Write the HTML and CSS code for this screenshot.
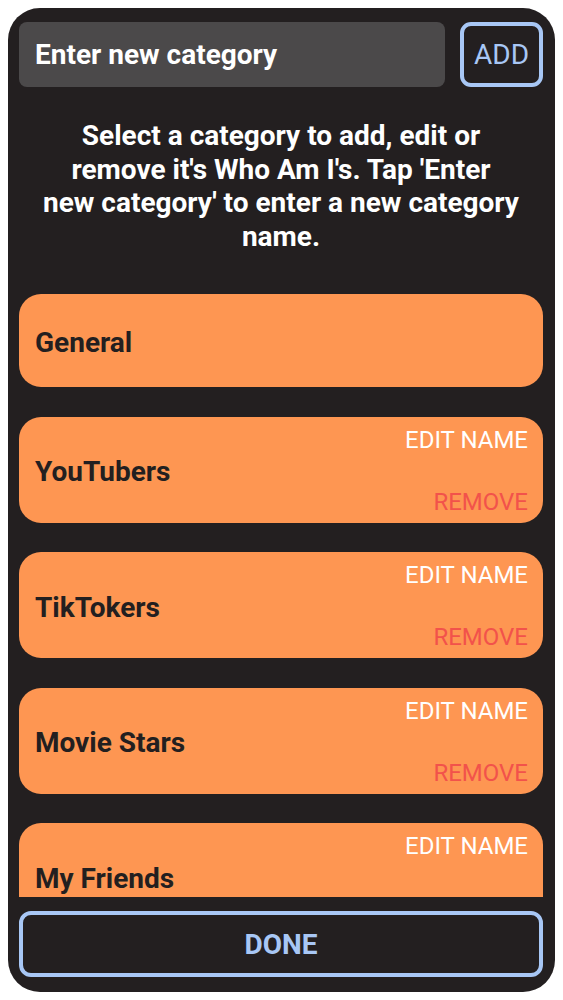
FILE: index.html
```html
<!DOCTYPE html>
<html>
<head>
  <title>Categories</title>
  <link rel="stylesheet" href="styles.css">
</head>
<body>
  <div class="panel">
    <div class="new-category">
      <input class="category-input" type="text" placeholder="Enter new category">
      <button class="add-button">ADD</button>
    </div>
    <p class="hint">Select a category to add, edit or remove it's Who Am I's. Tap 'Enter new&nbsp;category' to enter a new category name.</p>
    <div class="category-list">
      <div class="category fixed">
        <span class="category-name">General</span>
      </div>
      <div class="category">
        <span class="category-name">YouTubers</span>
        <div class="category-actions">
          <button class="edit">EDIT NAME</button>
          <button class="remove">REMOVE</button>
        </div>
      </div>
      <div class="category">
        <span class="category-name">TikTokers</span>
        <div class="category-actions">
          <button class="edit">EDIT NAME</button>
          <button class="remove">REMOVE</button>
        </div>
      </div>
      <div class="category">
        <span class="category-name">Movie Stars</span>
        <div class="category-actions">
          <button class="edit">EDIT NAME</button>
          <button class="remove">REMOVE</button>
        </div>
      </div>
      <div class="category">
        <span class="category-name">My Friends</span>
        <div class="category-actions">
          <button class="edit">EDIT NAME</button>
          <button class="remove">REMOVE</button>
        </div>
      </div>
    </div>
    <button class="done-button">DONE</button>
  </div>
</body>
</html>
```

FILE: styles.css
```css
body {
  margin: 0;
  background-color: #fff;
  font-family: Roboto, "Liberation Sans", sans-serif;
}
.panel {
  margin: 8px;
  height: 984px;
  box-sizing: border-box;
  padding: 14px 12px 15px 11px;
  background-color: #231f20;
  border-radius: 32px;
  display: flex;
  flex-direction: column;
}
.new-category {
  display: flex;
  gap: 15px;
  height: 65px;
}
.category-input {
  flex: 1;
  min-width: 0;
  border: none;
  border-radius: 8px;
  background-color: #4b494a;
  padding: 0 16px;
  font-family: inherit;
  font-size: 28px;
  font-weight: bold;
  color: #fff;
  outline: none;
}
.category-input::placeholder {
  color: #fff;
  opacity: 1;
}
.add-button {
  width: 83px;
  box-sizing: border-box;
  border: 4px solid #a8c7f5;
  border-radius: 11px;
  background-color: transparent;
  color: #a8c7f5;
  font-family: inherit;
  font-size: 28px;
  padding: 0;
}
.hint {
  margin: 32px 16px 41px;
  text-align: center;
  color: #fff;
  font-size: 28px;
  font-weight: bold;
  line-height: 33.5px;
}
.category-list {
  flex: 1;
  overflow: hidden;
  display: flex;
  flex-direction: column;
  gap: 29.5px;
}
.category {
  flex-shrink: 0;
  height: 106px;
  box-sizing: border-box;
  padding: 0 15px 0 16px;
  background-color: #fe9652;
  border-radius: 22px;
  display: flex;
  align-items: center;
  justify-content: space-between;
}
.category.fixed {
  height: 93px;
}
.category-name {
  margin-top: 4px;
  font-size: 28px;
  font-weight: bold;
  color: #231f20;
}
.category-actions {
  align-self: stretch;
  display: flex;
  flex-direction: column;
  justify-content: space-between;
  align-items: flex-end;
  padding: 9px 0 7px;
}
.category-actions button {
  border: none;
  background: none;
  padding: 0;
  font-family: inherit;
  font-size: 24px;
}
.edit {
  color: #fff;
}
.remove {
  color: #f2524b;
}
.done-button {
  margin-top: 14px;
  height: 66px;
  flex-shrink: 0;
  border: 4px solid #a8c7f5;
  border-radius: 12px;
  background-color: transparent;
  color: #a8c7f5;
  font-family: inherit;
  font-size: 28px;
  font-weight: bold;
}
```
